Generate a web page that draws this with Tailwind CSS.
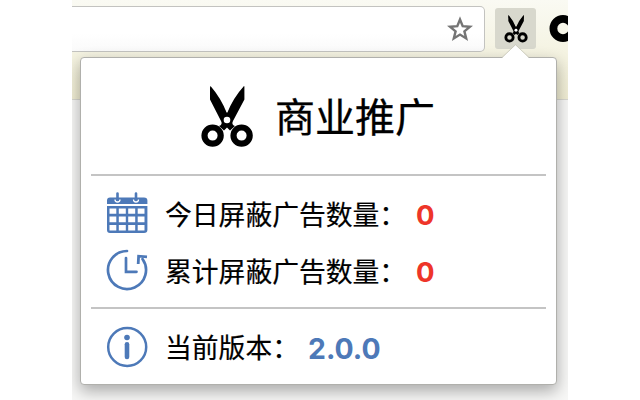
<!DOCTYPE html>
<html lang="zh-CN">
<head>
<meta charset="utf-8">
<title>商业推广</title>
<script src="https://cdn.jsdelivr.net/npm/@tailwindcss/browser@4"></script>
</head>
<body class="bg-white w-[640px] h-[400px] overflow-hidden font-['Noto_Sans_CJK_SC','Noto_Sans',sans-serif] text-black">
<svg class="hidden">
  <symbol id="scissors" viewBox="0 0 52 62">
    <path d="M9 0 26 27.5 43.4 0V13.5L32 35Q30 38.5 34 40L29 44.5 26 41.5 23 44.5 18 40Q22 38.5 20 35L9 13.5Z" fill="#000"/>
    <path d="M9.5 0Q20 12 26 27.5 32 12 43 0V6L30 34H22L9.5 6Z" fill="#000"/>
    <circle cx="11.6" cy="49.6" r="8.1" fill="none" stroke="#000" stroke-width="6.2"/>
    <circle cx="40.6" cy="49.6" r="8.1" fill="none" stroke="#000" stroke-width="6.2"/>
    <circle cx="26" cy="34" r="3.3" fill="#fff"/>
  </symbol>
</svg>
<div class="relative mx-auto w-[496px] h-[400px] overflow-hidden bg-[#f7f7f6]">
  <header class="flex h-[100px] items-start border-b border-[#d8d8d0] bg-linear-to-b from-[#fafaf3] to-[#f0edd3]">
    <div class="mt-[6px] flex h-[46px] w-[413px] shrink-0 items-center justify-end rounded-r-[5px] border border-l-0 border-[#c3c3c0] bg-linear-to-b from-white from-60% to-[#fafafa] pr-[11px]">
      <svg class="h-[26px] w-[26px]" viewBox="0 0 26 26" fill="none" stroke="#757575" stroke-width="2.4"><path d="M13 3.5 15.7 10.2 23 10.7 17.4 15.4 19.2 22.4 13 18.6 6.8 22.4 8.6 15.4 3 10.7 10.3 10.2Z"/></svg>
    </div>
    <div class="mt-[8px] ml-[10px] flex h-[41px] w-[41px] shrink-0 items-start justify-center rounded-[3px] bg-[#d8d8cd] pt-[7px]">
      <svg class="h-[28px] w-[24px]"><use href="#scissors"/></svg>
    </div>
    <svg class="mt-[15px] ml-[13px] h-[28px] w-[28px] shrink-0" viewBox="0 0 28 28"><circle cx="14" cy="13.5" r="9.6" fill="none" stroke="#000" stroke-width="7.8"/></svg>
  </header>
  <main class="absolute top-[57px] left-[8px] h-[328px] w-[477px] rounded-[4px] border border-[#b0b0ac] bg-white px-[10px] shadow-[0_6px_16px_rgba(0,0,0,0.32)]">
    <svg class="absolute -top-[14px] left-[421px] h-[15px] w-[27px]" viewBox="0 0 27 15"><path d="M0 14 13.5 1 27 14V15H0Z" fill="#fff"/><path d="M0 13.5 13.5 .7 27 13.5" fill="none" stroke="#c5c5b8" stroke-width=".8"/></svg>
    <div class="flex h-[118px] items-center border-b-2 border-[#c4c4c4] pl-[110px]">
      <svg class="mt-[1px] h-[62px] w-[52px] shrink-0"><use href="#scissors"/></svg>
      <h1 class="-mt-[2px] ml-[22px] text-[40px] leading-[60px] [-webkit-text-stroke:0.3px_black]">商业推广</h1>
    </div>
    <div class="h-[133px] border-b-2 border-[#c4c4c4] pt-[10px] pl-[15px]">
      <div class="flex h-[57px] items-center">
        <svg class="-mt-[4px] h-[42px] w-[42px] shrink-0" viewBox="0 0 42 42" fill="#4d79b8">
          <path d="M1 12V8.5Q1 5.5 4 5.5H38Q41.4 5.5 41.4 8.5V12ZM1 14H41.4V38Q41.4 41 38 41H4Q1 41 1 38Z"/>
          <path d="M3.5 16.5h6.8v5.3H3.5zM12.8 16.5h7v5.3h-7zM22.2 16.5h7v5.3h-7zM31.7 16.5h6.8v5.3h-6.8zM3.5 24.5h6.8v5.7H3.5zM12.8 24.5h7v5.7h-7zM22.2 24.5h7v5.7h-7zM31.7 24.5h6.8v5.7h-6.8zM3.5 33h6.8v5.5H3.5zM12.8 33h7v5.5h-7zM22.2 33h7v5.5h-7zM31.7 33h6.8v5.5h-6.8z" fill="#fff"/>
          <path d="M9 7.5a2.5 2.5 0 0 0 5 0M27.5 7.5a2.5 2.5 0 0 0 5 0" fill="none" stroke="#fff" stroke-width="1.3"/>
          <path d="M11.5 1.5V7.5M30 1.5V7.5" stroke="#4d79b8" stroke-width="2.6" stroke-linecap="round"/>
        </svg>
        <p class="-mt-[2px] ml-[17px] w-[251px] text-[26.8px] leading-[40px] whitespace-nowrap [-webkit-text-stroke:0.2px_black]">今日屏蔽广告数量：</p>
        <b class="mt-px font-['Inter'] text-[27.5px] leading-[40px] text-[#ee3529]">0</b>
      </div>
      <div class="flex h-[57px] items-center">
        <svg class="-mt-[4px] h-[42px] w-[42px] shrink-0" viewBox="0 0 42 42" fill="none" stroke="#4d79b8" stroke-width="2.7">
          <path d="M21 2A19 19 0 1 0 36.5 10" stroke-linecap="round"/>
          <path d="M20 9V22.8H30.5" stroke-linecap="round"/>
          <path d="M32.2 15 32.6 7.2 41 7.8" stroke-width="2.8"/>
        </svg>
        <p class="-mt-[2px] ml-[17px] w-[251px] text-[26.8px] leading-[40px] whitespace-nowrap [-webkit-text-stroke:0.2px_black]">累计屏蔽广告数量：</p>
        <b class="mt-px font-['Inter'] text-[27.5px] leading-[40px] text-[#ee3529]">0</b>
      </div>
    </div>
    <div class="flex h-[75px] items-center pl-[15px]">
      <svg class="h-[42px] w-[42px] shrink-0" viewBox="0 0 42 42"><circle cx="21.2" cy="21" r="19" fill="none" stroke="#4d79b8" stroke-width="2.5"/><circle cx="21" cy="11.5" r="2.8" fill="#4d79b8"/><path d="M21 18.2V31" stroke="#4d79b8" stroke-width="4.6" stroke-linecap="round"/></svg>
      <p class="ml-[17px] w-[143px] text-[26.8px] leading-[40px] whitespace-nowrap [-webkit-text-stroke:0.2px_black]">当前版本：</p>
      <b class="mt-[4px] font-['Inter'] text-[28.4px] leading-[40px] text-[#4d79b8]">2.0.0</b>
    </div>
  </main>
</div>
</body>
</html>
